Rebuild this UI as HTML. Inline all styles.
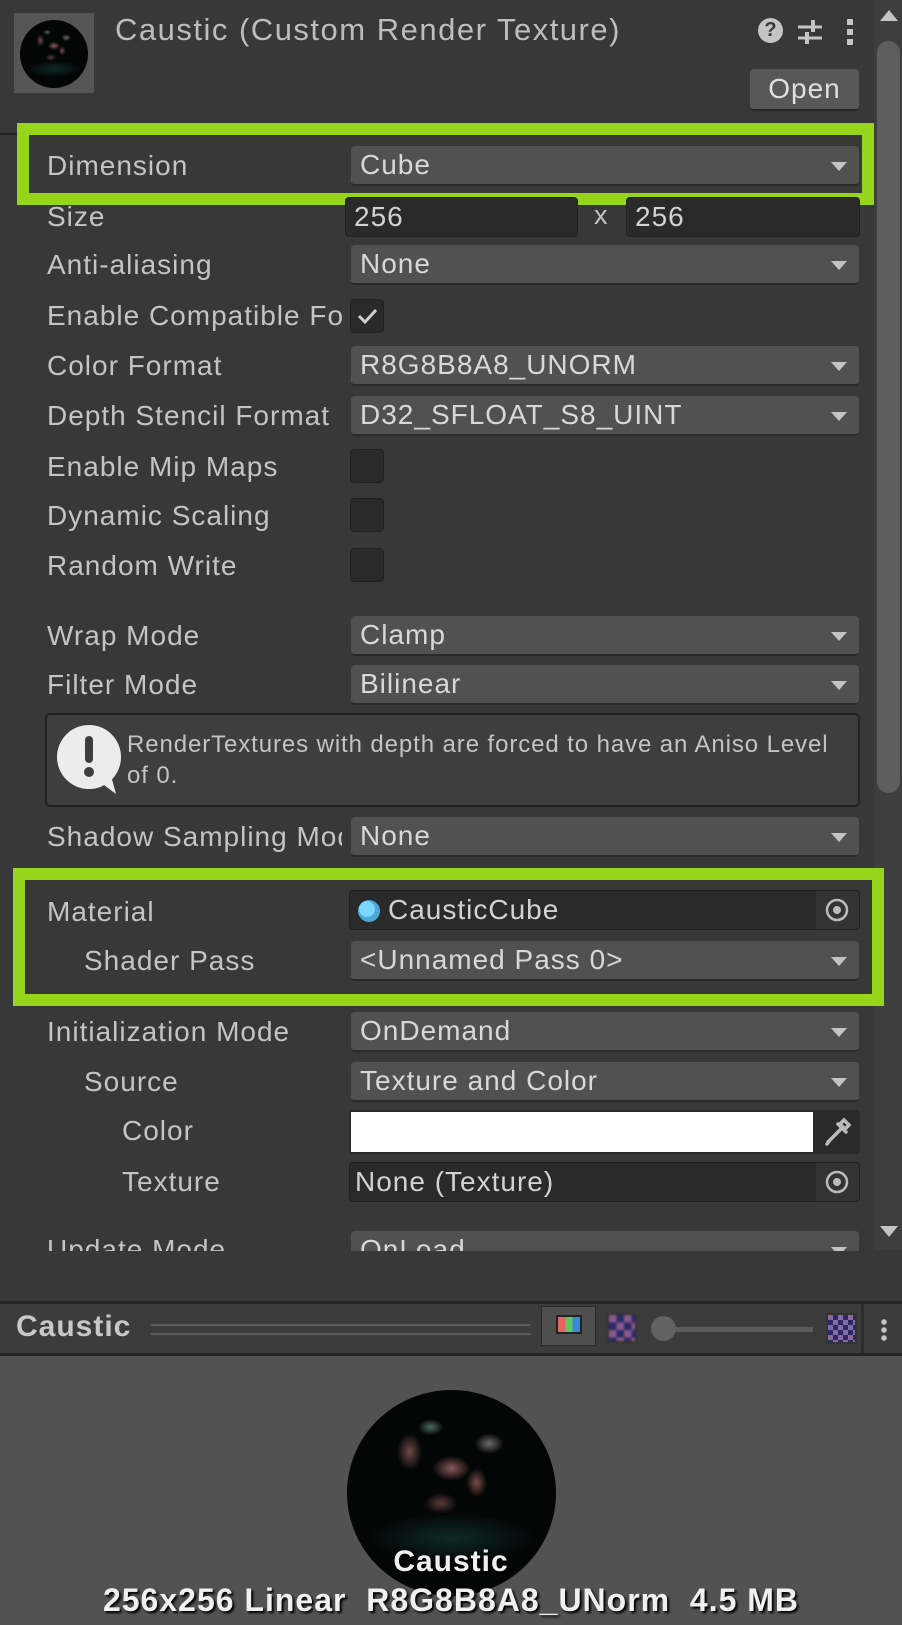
<!DOCTYPE html>
<html><head><meta charset="utf-8"><style>
*{margin:0;padding:0;box-sizing:border-box}
body{width:902px;height:1625px;background:#383838;position:relative;overflow:hidden;font-family:"Liberation Sans",sans-serif;color:#c4c4c4;letter-spacing:1px}
.a{position:absolute}
.lbl{position:absolute;left:47px;font-size:28px;white-space:nowrap;line-height:30px}
.dd{position:absolute;left:351px;width:508px;height:40px;background:#515151;border-radius:4px;border-bottom:2px solid #2a2a2a;font-size:28px;color:#d8d8d8;line-height:38px;padding-left:9px;white-space:nowrap}
.dd:after{content:"";position:absolute;right:12px;top:16px;border-left:8px solid transparent;border-right:8px solid transparent;border-top:9px solid #c4c4c4}
.tf{position:absolute;height:40px;background:#2a2a2a;border:1px solid #212121;border-radius:4px;font-size:28px;color:#d2d2d2;line-height:38px;padding-left:8px;white-space:nowrap}
.cb{position:absolute;left:350px;width:34px;height:34px;background:#2a2a2a;border:1px solid #212121;border-radius:4px}
.green{position:absolute;border:12px solid #97d51c}
.sph{background:
radial-gradient(ellipse 9% 6% at 50% 38%,#8a5a58 0,transparent 100%),
radial-gradient(ellipse 6% 9% at 30% 30%,#6a4a48 0,transparent 100%),
radial-gradient(ellipse 7% 5% at 68% 26%,#6a6a68 0,transparent 100%),
radial-gradient(ellipse 6% 4% at 40% 18%,#4a6a66 0,transparent 100%),
radial-gradient(ellipse 5% 7% at 62% 45%,#7a4a48 0,transparent 100%),
radial-gradient(ellipse 8% 5% at 45% 55%,#5a3a38 0,transparent 100%),
radial-gradient(ellipse 40% 12% at 50% 72%,#0e2a28 0,transparent 100%),
#040606}
</style></head><body>
<div class="a" style="left:14px;top:13px;width:80px;height:80px;background:#555"></div>
<div class="a sph" style="left:20px;top:20px;width:68px;height:68px;border-radius:50%"></div>
<div class="a" style="left:115px;top:12px;font-size:31px;color:#bdbdbd;white-space:nowrap;letter-spacing:1.5px">Caustic (Custom Render Texture)</div>
<div class="a" style="left:758px;top:18px;width:25px;height:25px;border-radius:50%;background:#c4c4c4;color:#383838;font-weight:bold;font-size:20px;text-align:center;line-height:25px;letter-spacing:0">?</div>
<svg class="a" style="left:796px;top:18px" width="28" height="28"><path d="M2 9h24M2 20h24" stroke="#c4c4c4" stroke-width="3"/><rect x="15" y="2" width="4" height="12" fill="#c4c4c4"/><rect x="9" y="14" width="4" height="12" fill="#c4c4c4"/></svg>
<div class="a" style="left:847px;top:19px;width:6px;height:26px;background:repeating-linear-gradient(#c4c4c4 0 6px,transparent 6px 10px)"></div>
<div class="a" style="left:750px;top:69px;width:109px;height:42px;background:#585858;border-radius:4px;border-bottom:2px solid #252525;font-size:28px;color:#e0e0e0;text-align:center;line-height:40px">Open</div>
<div class="a" style="left:0;top:133px;width:28px;height:2px;background:#222"></div>
<div class="a" style="left:874px;top:0;width:28px;height:1250px;background:#3e3e3e"></div>
<div class="a" style="left:880px;top:10px;border-left:9px solid transparent;border-right:9px solid transparent;border-bottom:11px solid #c4c4c4"></div>
<div class="a" style="left:877px;top:41px;width:23px;height:752px;background:#5e5e5e;border-radius:12px"></div>
<div class="a" style="left:880px;top:1226px;border-left:9px solid transparent;border-right:9px solid transparent;border-top:11px solid #c4c4c4"></div>

<div class="green" style="left:17px;top:123px;width:857px;height:82px;background:#383838"></div>
<div class="lbl" style="top:151px">Dimension</div><div class="dd" style="top:146px">Cube</div>
<div class="lbl" style="top:202px">Size</div>
<div class="tf" style="left:345px;top:197px;width:233px">256</div>
<div class="a" style="left:594px;top:200px;font-size:27px">x</div>
<div class="tf" style="left:626px;top:197px;width:234px">256</div>
<div class="lbl" style="top:250px">Anti-aliasing</div><div class="dd" style="top:245px">None</div>
<div class="lbl" style="top:301px;width:296px;overflow:hidden">Enable Compatible Format</div>
<div class="cb" style="top:299px"><svg width="32" height="32"><path d="M8 16l6 6 11-12" stroke="#d0d0d0" stroke-width="3" fill="none"/></svg></div>
<div class="lbl" style="top:351px">Color Format</div><div class="dd" style="top:346px">R8G8B8A8_UNORM</div>
<div class="lbl" style="top:401px;width:297px;overflow:hidden">Depth Stencil Format</div><div class="dd" style="top:396px">D32_SFLOAT_S8_UINT</div>
<div class="lbl" style="top:452px">Enable Mip Maps</div><div class="cb" style="top:449px"></div>
<div class="lbl" style="top:501px">Dynamic Scaling</div><div class="cb" style="top:498px"></div>
<div class="lbl" style="top:551px">Random Write</div><div class="cb" style="top:548px"></div>
<div class="lbl" style="top:621px">Wrap Mode</div><div class="dd" style="top:616px">Clamp</div>
<div class="lbl" style="top:670px">Filter Mode</div><div class="dd" style="top:665px">Bilinear</div>
<div class="a" style="left:45px;top:713px;width:815px;height:94px;background:#3e3e3e;border:2px solid #222;border-radius:5px"></div>
<svg class="a" style="left:56px;top:724px" width="70" height="70"><circle cx="33" cy="33" r="32" fill="#ececec"/><path d="M40 55l20 15-6-22z" fill="#ececec"/><rect x="29" y="12" width="8" height="27" rx="4" fill="#3e3e3e"/><circle cx="33" cy="48" r="5" fill="#3e3e3e"/></svg>
<div class="a" style="left:127px;top:729px;font-size:24px;line-height:31px;color:#c4c4c4;width:720px;letter-spacing:0.9px">RenderTextures with depth are forced to have an Aniso Level of 0.</div>
<div class="lbl" style="top:822px;width:295px;overflow:hidden">Shadow Sampling Mode</div><div class="dd" style="top:817px">None</div>

<div class="green" style="left:13px;top:868px;width:871px;height:138px;background:#383838"></div>
<div class="lbl" style="top:897px">Material</div>
<div class="tf" style="left:349px;top:890px;width:511px;padding-left:0">
<svg class="a" style="left:6px;top:7px" width="26" height="26"><circle cx="13" cy="13" r="11" fill="#4aa8d8"/><circle cx="11" cy="11" r="8" fill="#7dd6ff"/></svg>
<span style="position:absolute;left:38px">CausticCube</span>
<div class="a" style="right:0;top:0;width:43px;height:38px;background:#333;border-radius:0 4px 4px 0"><svg width="43" height="38"><circle cx="21" cy="19" r="10" stroke="#bbb" stroke-width="2.5" fill="none"/><circle cx="21" cy="19" r="4" fill="#bbb"/></svg></div>
</div>
<div class="lbl" style="top:946px;left:84px">Shader Pass</div><div class="dd" style="top:941px">&lt;Unnamed Pass 0&gt;</div>

<div class="lbl" style="top:1017px">Initialization Mode</div><div class="dd" style="top:1012px">OnDemand</div>
<div class="lbl" style="top:1067px;left:84px">Source</div><div class="dd" style="top:1062px">Texture and Color</div>
<div class="lbl" style="top:1116px;left:122px">Color</div>
<div class="a" style="left:349px;top:1110px;width:511px;height:44px;background:#2a2a2a;border-radius:4px"></div>
<div class="a" style="left:351px;top:1112px;width:462px;height:40px;background:#fff"></div>
<svg class="a" style="left:822px;top:1114px" width="32" height="34"><path d="M6 28l14-14M8 26l-3 4M16 10l8 8M22 6l5 5-4 4-5-5z" stroke="#bbb" stroke-width="3.5" fill="none" stroke-linecap="round"/></svg>
<div class="lbl" style="top:1167px;left:122px">Texture</div>
<div class="tf" style="left:349px;top:1162px;width:511px;padding-left:5px">None (Texture)
<div class="a" style="right:0;top:0;width:43px;height:38px;background:#333;border-radius:0 4px 4px 0"><svg width="43" height="38"><circle cx="21" cy="19" r="10" stroke="#bbb" stroke-width="2.5" fill="none"/><circle cx="21" cy="19" r="4" fill="#bbb"/></svg></div></div>
<div class="a" style="left:0;top:1230px;width:874px;height:21px;overflow:hidden">
<div class="lbl" style="top:5px">Update Mode</div><div class="dd" style="top:1px">OnLoad</div></div>

<div class="a" style="left:0;top:1301px;width:902px;height:3px;background:#242424"></div>
<div class="a" style="left:0;top:1304px;width:902px;height:49px;background:#3c3c3c"></div>
<div class="a" style="left:0;top:1353px;width:902px;height:3px;background:#242424"></div>
<div class="a" style="left:16px;top:1310px;font-size:30px;font-weight:bold;color:#c8c8c8">Caustic</div>
<div class="a" style="left:151px;top:1324px;width:380px;height:2px;background:#5a5a5a"></div>
<div class="a" style="left:151px;top:1333px;width:380px;height:2px;background:#5a5a5a"></div>
<div class="a" style="left:541px;top:1306px;width:55px;height:40px;background:#4f4f4f;border:1px solid #2a2a2a"></div>
<div class="a" style="left:556px;top:1315px;width:26px;height:19px;border:2px solid #222;background:linear-gradient(90deg,#e86464 0 33%,#60c860 33% 66%,#3c88dc 66%)"></div>
<div class="a" style="left:607px;top:1313px;width:30px;height:30px;background:repeating-conic-gradient(#2a2a6a 0 25%,#8a5a88 0 50%) 0 0/15px 15px;border:2px solid #333;filter:blur(1px)"></div>
<div class="a" style="left:663px;top:1327px;width:150px;height:5px;background:#5c5c5c"></div>
<div class="a" style="left:651px;top:1316px;width:25px;height:25px;border-radius:50%;background:#626262"></div>
<div class="a" style="left:826px;top:1313px;width:31px;height:31px;background:repeating-conic-gradient(#2a2a6a 0 25%,#8a6a98 0 50%) 0 0/10px 10px;border:2px solid #333"></div>
<div class="a" style="left:861px;top:1304px;width:3px;height:49px;background:#2e2e2e"></div>
<div class="a" style="left:881px;top:1318px;width:6px;height:24px;background:radial-gradient(circle,#c4c4c4 2.5px,transparent 3px) 0 0/6px 8px"></div>

<div class="a" style="left:0;top:1356px;width:902px;height:269px;background:#525252"></div>
<div class="a sph" style="left:347px;top:1390px;width:209px;height:206px;border-radius:50%"></div>
<div class="a" style="left:0;width:902px;top:1545px;text-align:center;font-size:30px;font-weight:bold;color:#f0f0f0;text-shadow:2px 2px 2px #000">Caustic</div>
<div class="a" style="left:0;width:902px;top:1582px;text-align:center;font-size:32px;font-weight:bold;color:#f0f0f0;text-shadow:2px 2px 2px #000;white-space:pre;letter-spacing:1px">256x256 Linear  R8G8B8A8_UNorm  4.5 MB</div>
</body></html>
